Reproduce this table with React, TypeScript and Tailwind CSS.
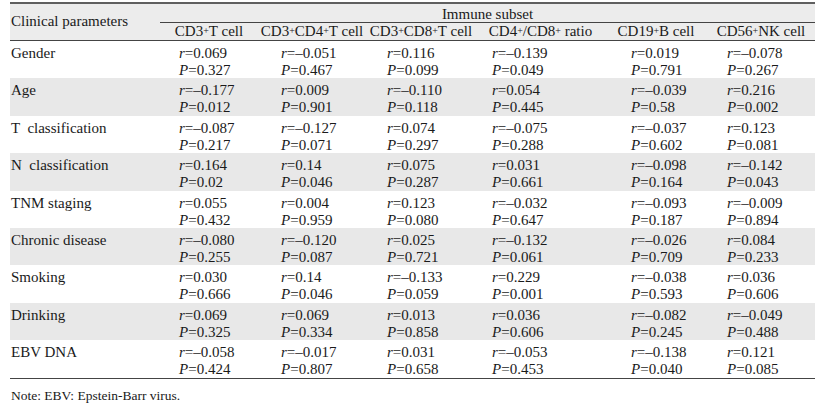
const rows: [string, string[], string[]][] = [
  ["Gender", ["0.069", "–0.051", "0.116", "–0.139", "0.019", "–0.078"], ["0.327", "0.467", "0.099", "0.049", "0.791", "0.267"]],
  ["Age", ["–0.177", "0.009", "–0.110", "0.054", "–0.039", "0.216"], ["0.012", "0.901", "0.118", "0.445", "0.58", "0.002"]],
  ["T  classification", ["–0.087", "–0.127", "0.074", "–0.075", "–0.037", "0.123"], ["0.217", "0.071", "0.297", "0.288", "0.602", "0.081"]],
  ["N  classification", ["0.164", "0.14", "0.075", "0.031", "–0.098", "–0.142"], ["0.02", "0.046", "0.287", "0.661", "0.164", "0.043"]],
  ["TNM staging", ["0.055", "0.004", "0.123", "–0.032", "–0.093", "–0.009"], ["0.432", "0.959", "0.080", "0.647", "0.187", "0.894"]],
  ["Chronic disease", ["–0.080", "–0.120", "0.025", "–0.132", "–0.026", "0.084"], ["0.255", "0.087", "0.721", "0.061", "0.709", "0.233"]],
  ["Smoking", ["0.030", "0.14", "–0.133", "0.229", "–0.038", "0.036"], ["0.666", "0.046", "0.059", "0.001", "0.593", "0.606"]],
  ["Drinking", ["0.069", "0.069", "0.013", "0.036", "–0.082", "–0.049"], ["0.325", "0.334", "0.858", "0.606", "0.245", "0.488"]],
  ["EBV DNA", ["–0.058", "–0.017", "0.031", "–0.053", "–0.138", "0.121"], ["0.424", "0.807", "0.658", "0.453", "0.040", "0.085"]],
];

const grid = "grid grid-cols-[150px_98px_108px_110px_129px_102px_108px]";
const pads = ["pl-[19px]", "pl-[23px]", "pl-[21px]", "pl-[16px]", "pl-[26px]", "pl-[20px]"];

const Sup = () => <sup className="text-[10px] relative -top-[2px]">+</sup>;

export default function App() {
  return (
    <div className="w-[821px] h-[409px] bg-white text-[#1a1a1a] font-[family-name:'Liberation_Serif','Times_New_Roman',serif] text-[15px] leading-none pt-[2px] pl-[10px]">
      <div className="w-[805px]">
        <div className="border-t-2 border-b border-t-[#5f5f5f] border-b-[#444] bg-[#ececec] h-[39px] flex">
          <div className="w-[150px] flex items-center pl-[1px] pb-[1px]">Clinical parameters</div>
          <div className="flex-1 flex flex-col">
            <div className="h-[19px] border-b border-[#444] flex items-center justify-center pt-[2px]">Immune subset</div>
            <div className="flex-1 flex items-center">
              <div className="w-[98px] text-center">CD3<Sup />T cell</div>
              <div className="w-[108px] text-center">CD3<Sup />CD4<Sup />T cell</div>
              <div className="w-[110px] text-center">CD3<Sup />CD8<Sup />T cell</div>
              <div className="w-[129px] text-center">CD4<Sup />/CD8<Sup /> ratio</div>
              <div className="w-[102px] text-center">CD19<Sup />B cell</div>
              <div className="w-[108px] text-center">CD56<Sup />NK cell</div>
            </div>
          </div>
        </div>
        <div className="border-b border-[#444]">
          {rows.map(([name, r, p], i) => (
            <div key={name} className={`${grid} h-[37.4px] ${i % 2 === 1 ? "bg-[#e8e8e8]" : "bg-white"}`}>
              <div className="pl-[1px] pt-[5px] whitespace-pre">{name}</div>
              {r.map((v, j) => (
                <div key={j} className={`${pads[j]} flex flex-col gap-[2px] pt-[5px]`}>
                  <span><i>r</i>={v}</span>
                  <span><i>P</i>={p[j]}</span>
                </div>
              ))}
            </div>
          ))}
        </div>
        <div className="text-[13.5px] pt-[10px] pl-[1px]">Note: EBV: Epstein-Barr virus.</div>
      </div>
    </div>
  );
}
